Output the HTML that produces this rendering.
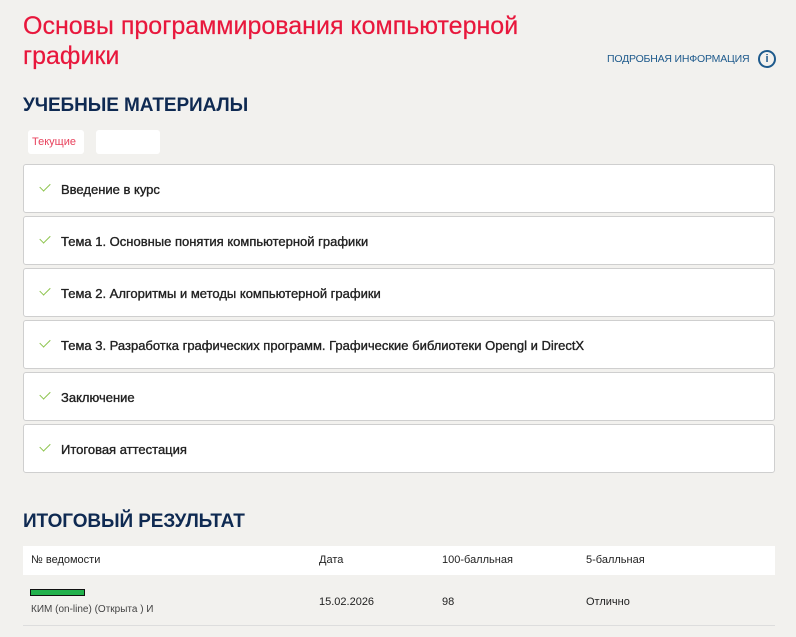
<!DOCTYPE html>
<html><head><meta charset="utf-8"><style>
body{margin:0;background:#f2f1ee;font-family:"Liberation Sans",sans-serif;width:796px;height:637px;overflow:hidden;position:relative}
.t{position:absolute;left:23px;top:11px;color:#e8173c;font-size:25px;line-height:30px;width:560px;-webkit-text-stroke:.2px #e8173c}
.info{position:absolute;left:607px;top:53px;color:#1e5a8c;font-size:10.5px;letter-spacing:-.2px}
.ic{position:absolute;left:758px;top:50px;width:14px;height:14px;border:2px solid #1e5a8c;border-radius:50%;color:#1e5a8c;font-size:11px;font-weight:bold;text-align:center;line-height:14px}
h2{position:absolute;left:23px;margin:0;color:#0f2a52;font-size:19px;font-weight:bold;letter-spacing:-.1px}
.tab{position:absolute;top:130px;height:24px;background:#fff;border-radius:3px;font-size:11px;color:#e8415c;line-height:24px}
.it{position:absolute;left:23px;width:750px;height:47px;background:#fff;border:1px solid #cfcfcf;border-radius:3px;font-size:13px;color:#222;line-height:49px;-webkit-text-stroke:.35px #222}
.it span{position:absolute;left:37px}
.it i{position:absolute;left:16px;top:18px;width:9px;height:5px;border-left:1.5px solid #8bc34a;border-bottom:1.5px solid #8bc34a;transform:rotate(-45deg);-webkit-text-stroke:0}
.th{position:absolute;left:23px;top:546px;width:752px;height:29px;background:#fff;font-size:11px;color:#222;line-height:29px}
.c{position:absolute}
.row{position:absolute;left:23px;top:575px;width:752px;height:50px;border-bottom:1px solid #ddd;font-size:11px;color:#222}
</style></head><body>
<div class="t">Основы программирования компьютерной графики</div>
<div class="info">ПОДРОБНАЯ ИНФОРМАЦИЯ</div>
<div class="ic">i</div>
<h2 style="top:95px">УЧЕБНЫЕ МАТЕРИАЛЫ</h2>
<div class="tab" style="left:28px;width:56px;padding-left:4px;box-sizing:border-box">Текущие</div>
<div class="tab" style="left:96px;width:64px"></div>
<div class="it" style="top:164px"><i></i><span>Введение в курс</span></div>
<div class="it" style="top:216px"><i></i><span>Тема 1. Основные понятия компьютерной графики</span></div>
<div class="it" style="top:268px"><i></i><span>Тема 2. Алгоритмы и методы компьютерной графики</span></div>
<div class="it" style="top:320px"><i></i><span>Тема 3. Разработка графических программ. Графические библиотеки Opengl и DirectX</span></div>
<div class="it" style="top:372px"><i></i><span>Заключение</span></div>
<div class="it" style="top:424px"><i></i><span>Итоговая аттестация</span></div>
<h2 style="top:511px">ИТОГОВЫЙ РЕЗУЛЬТАТ</h2>
<div class="th"><span class="c" style="left:8px">№ ведомости</span><span class="c" style="left:296px">Дата</span><span class="c" style="left:419px">100-балльная</span><span class="c" style="left:563px">5-балльная</span></div>
<div class="row">
<div class="c" style="left:7px;top:14px;width:53px;height:5px;background:#22b14c;border:1px solid #111"></div>
<div class="c" style="left:8px;top:29px;font-size:10px;color:#444">КИМ (on-line) (Открыта ) И</div>
<div class="c" style="left:296px;top:21px">15.02.2026</div>
<div class="c" style="left:419px;top:21px">98</div>
<div class="c" style="left:563px;top:21px">Отлично</div>
</div>
</body></html>
